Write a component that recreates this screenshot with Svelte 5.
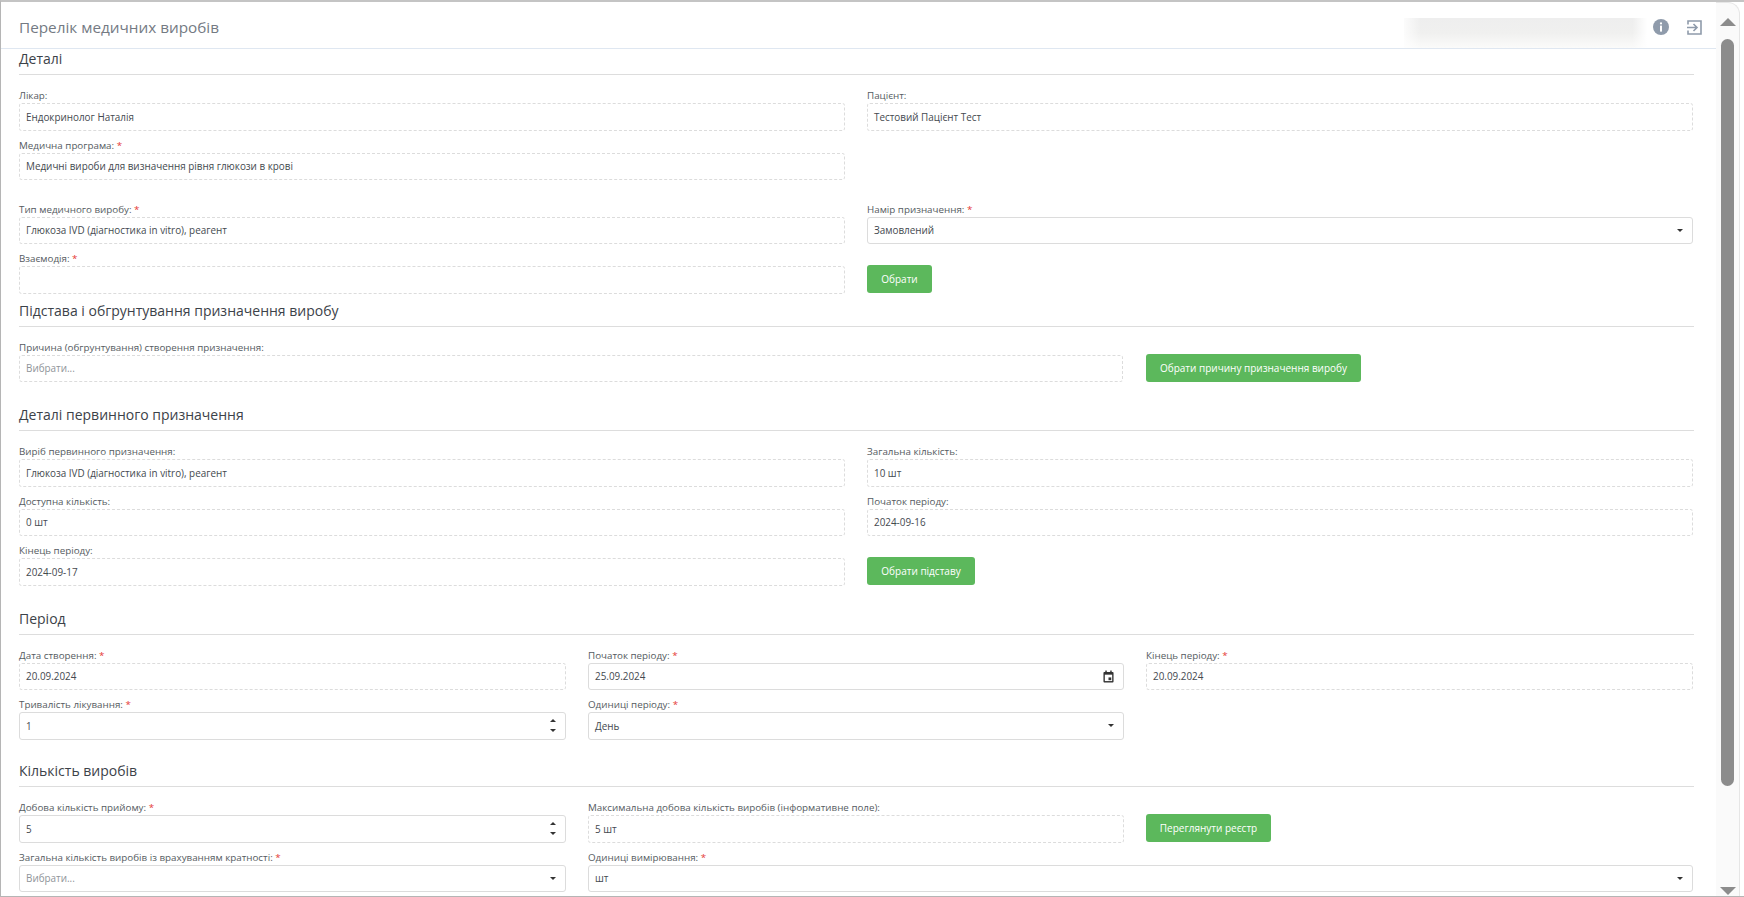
<script>
  const sections = [
    { title: 'Деталі', cls: 'first', rows: [
      [{ l: 'Лікар:', v: 'Ендокринолог Наталія', t: 'ro' }, { l: 'Пацієнт:', v: 'Тестовий Пацієнт Тест', t: 'ro' }],
      [{ l: 'Медична програма:', req: 1, v: 'Медичні вироби для визначення рівня глюкози в крові', t: 'ro' }, { t: 'none' }],
      'gap',
      [{ l: 'Тип медичного виробу:', req: 1, v: 'Глюкоза IVD (діагностика in vitro), реагент', t: 'ro' }, { l: 'Намір призначення:', req: 1, v: 'Замовлений', t: 'select' }],
      [{ l: 'Взаємодія:', req: 1, v: '', t: 'ro' }, { t: 'btn', v: 'Обрати', w: 65 }]
    ]},
    { title: 'Підстава і обгрунтування призначення виробу', grid: 'wide', rows: [
      [{ l: 'Причина (обгрунтування) створення призначення:', v: 'Вибрати...', t: 'ro', ph: 1 }, { t: 'btn', v: 'Обрати причину призначення виробу', w: 215 }]
    ]},
    { title: 'Деталі первинного призначення', rows: [
      [{ l: 'Виріб первинного призначення:', v: 'Глюкоза IVD (діагностика in vitro), реагент', t: 'ro' }, { l: 'Загальна кількість:', v: '10 шт', t: 'ro' }],
      [{ l: 'Доступна кількість:', v: '0 шт', t: 'ro' }, { l: 'Початок періоду:', v: '2024-09-16', t: 'ro' }],
      [{ l: 'Кінець періоду:', v: '2024-09-17', t: 'ro' }, { t: 'btn', v: 'Обрати підставу', w: 108 }]
    ]},
    { title: 'Період', cls: 'tight', grid: 'three', rows: [
      [{ l: 'Дата створення:', req: 1, v: '20.09.2024', t: 'ro' }, { l: 'Початок періоду:', req: 1, v: '25.09.2024', t: 'date' }, { l: 'Кінець періоду:', req: 1, v: '20.09.2024', t: 'ro' }],
      [{ l: 'Тривалість лікування:', req: 1, v: '1', t: 'num' }, { l: 'Одиниці періоду:', req: 1, v: 'День', t: 'select' }, { t: 'none' }]
    ]},
    { title: 'Кількість виробів', grid: 'three', rows: [
      [{ l: 'Добова кількість прийому:', req: 1, v: '5', t: 'num' }, { l: 'Максимальна добова кількість виробів (інформативне поле):', v: '5 шт', t: 'ro' }, { t: 'btn', v: 'Переглянути реєстр', w: 125 }],
      [{ l: 'Загальна кількість виробів із врахуванням кратності:', req: 1, v: 'Вибрати...', t: 'select', ph: 1 }, { l: 'Одиниці вимірювання:', req: 1, v: 'шт', t: 'select', span: 1 }]
    ]}
  ];
</script>

{#snippet caret()}
  <span class="caret"></span>
{/snippet}

<div class="window">
  <div class="panel">
    <header class="head">
      <h1>Перелік медичних виробів</h1>
      <div class="tools">
        <div class="blur"></div>
        <svg class="info" viewBox="0 0 16 16" width="16" height="16" aria-hidden="true">
          <circle cx="8" cy="8" r="8" fill="#8f9bab" />
          <circle cx="8" cy="4.4" r="1.1" fill="#fff" />
          <rect x="7" y="6.6" width="2" height="6" fill="#fff" />
        </svg>
        <svg class="exit" viewBox="0 0 15 15" width="15" height="15" aria-hidden="true">
          <path d="M1 4.5V1h13v13H1v-3.5" fill="none" stroke="#8f9bab" stroke-width="1.6" />
          <path d="M0 7.5h9M6.5 4l3.5 3.5L6.5 11" fill="none" stroke="#8f9bab" stroke-width="1.6" />
        </svg>
      </div>
    </header>
    <main class="content">
      {#each sections as s}
        <section class={s.cls}>
          <h2>{s.title}</h2>
          <div class="rows">
            {#each s.rows as row}
              {#if row === 'gap'}
                <div class="spacer"></div>
              {:else}
                <div class="row {s.grid ?? ''}">
                  {#each row as f}
                    {#if f.t === 'none'}
                      <div></div>
                    {:else if f.t === 'btn'}
                      <div class="btn-cell"><button style="width:{f.w}px">{f.v}</button></div>
                    {:else}
                      <div class="field" class:span={f.span}>
                        <div class="label">{f.l}{#if f.req}&nbsp;<span class="req">*</span>{/if}</div>
                        <div class="input {f.t}" class:ph={f.ph}>
                          <span class="val">{f.v}</span>
                          {#if f.t === 'select'}
                            {@render caret()}
                          {:else if f.t === 'num'}
                            <span class="spin"><i class="up"></i><i class="down"></i></span>
                          {:else if f.t === 'date'}
                            <svg viewBox="0 0 12 14" width="11" height="13" aria-hidden="true">
                              <path d="M1.5 2h9A1 1 0 0 1 11.5 3v9.5a1 1 0 0 1-1 1h-9a1 1 0 0 1-1-1V3a1 1 0 0 1 1-1z" fill="#333" />
                              <rect x="2.5" y="0.5" width="1.6" height="2.5" fill="#333" />
                              <rect x="7.9" y="0.5" width="1.6" height="2.5" fill="#333" />
                              <rect x="2" y="5" width="8" height="7" fill="#fff" />
                              <rect x="6" y="8" width="3" height="3" fill="#333" />
                            </svg>
                          {/if}
                        </div>
                      </div>
                    {/if}
                  {/each}
                </div>
              {/if}
            {/each}
          </div>
        </section>
      {/each}
    </main>
  </div>
  <aside class="scrollbar">
    <i class="arrow up"></i>
    <div class="track"><div class="thumb"></div></div>
    <i class="arrow down"></i>
  </aside>
</div>

<style>
  :global(body) {
    margin: 0;
    background: #fff;
    font-family: "Open Sans", "Liberation Sans", sans-serif;
    overflow: hidden;
  }
  .window {
    box-sizing: border-box;
    height: 897px;
    width: 1744px;
    overflow: hidden;
    display: flex;
    padding-right: 4px;
    border-top: 2px solid #c4c4c4;
    border-left: 1px solid #b5b5b5;
    border-bottom: 1px solid #b5b5b5;
    background: #fff;
  }
  .panel {
    flex: 1;
    min-width: 0;
    display: flex;
    flex-direction: column;
    padding-top: 1px;
  }
  .head {
    flex: none;
    height: 46px;
    box-sizing: border-box;
    border-bottom: 1px solid #dfe7f1;
    display: flex;
    align-items: flex-start;
    justify-content: space-between;
    padding: 0 14px 0 18px;
  }
  h1 {
    margin: 0;
    font-size: 15.3px;
    font-weight: 400;
    line-height: 20px;
    padding-top: 14px;
    color: #747a83;
  }
  .tools {
    display: flex;
    align-items: flex-start;
  }
  .blur {
    width: 243px;
    height: 30px;
    margin-top: 15px;
    background:
      linear-gradient(90deg, rgba(255,255,255,.8) 0, rgba(255,255,255,0) 7%, rgba(255,255,255,0) 94%, #fff 100%),
      linear-gradient(180deg, #eeeeee 0, #f0f0ef 50%, #fbfbfa 100%);
  }
  .info { margin: 16px 0 0 6px; flex: none; }
  .exit { margin: 17px 0 0 18px; flex: none; }
  .content {
    padding: 0 22px 0 18px;
  }
  section { margin-bottom: 16px; }
  section.first { margin-bottom: 0; }
  section.tight { margin-bottom: 14.5px; }
  h2 {
    margin: 0;
    font-size: 14px;
    line-height: 20px;
    font-weight: 400;
    color: #3c4249;
    padding: 5px 0 5px;
    border-bottom: 1px solid #ddd;
  }
  .first h2 { padding-top: 0; }
  .rows { padding-top: 8px; }
  .spacer { height: 14.5px; }
  .row {
    display: grid;
    grid-template-columns: 826px 826px;
    column-gap: 22px;
    height: 49.5px;
  }
  .row.wide { grid-template-columns: 1104px 547px; column-gap: 23px; }
  .row.three { grid-template-columns: 547px 536px 547px; column-gap: 22px; }
  .field { min-width: 0; }
  .field.span { grid-column: span 2; }
  .label {
    height: 20px;
    line-height: 14px;
    padding-top: 6px;
    box-sizing: border-box;
    font-size: 9.8px;
    color: #555b61;
    white-space: nowrap;
  }
  .req { color: #e53935; }
  .input {
    box-sizing: border-box;
    height: 27.5px;
    border: 1px solid #dcdcdc;
    border-radius: 3px;
    display: flex;
    align-items: center;
    justify-content: space-between;
    padding: 0 9px 0 6px;
    font-size: 9.9px;
    color: #44494f;
    background: #fff;
  }
  .input.ro { border-style: dashed; }
  .input.ph .val { color: #8f9499; }
  .caret {
    width: 0;
    height: 0;
    border-left: 3px solid transparent;
    border-right: 3px solid transparent;
    border-top: 3px solid #333;
  }
  .spin {
    display: flex;
    flex-direction: column;
    gap: 7px;
  }
  .spin i {
    display: block;
    width: 0;
    height: 0;
    border-left: 3px solid transparent;
    border-right: 3px solid transparent;
  }
  .spin .up { border-bottom: 3px solid #333; }
  .spin .down { border-top: 3px solid #333; }
  .btn-cell { padding-top: 19px; }
  button {
    display: block;
    height: 28px;
    border: 0;
    border-radius: 3px;
    background: #5cb85c;
    color: #fff;
    font: 400 10px "Open Sans", "Liberation Sans", sans-serif;
    padding: 0;
  }
  .scrollbar {
    flex: none;
    width: 24px;
    display: flex;
    flex-direction: column;
    align-items: center;
    background: #fafafa;
    border-right: 1px solid #e6e6e6;
    border-top: 1px solid #e6e6e6;
    border-top-right-radius: 12px;
    box-sizing: border-box;
  }
  .arrow {
    display: block;
    flex: none;
    width: 0;
    height: 0;
    border-left: 8px solid transparent;
    border-right: 8px solid transparent;
  }
  .arrow.up { border-bottom: 8px solid #8c8c8c; margin-top: 15px; }
  .arrow.down { border-top: 8px solid #8c8c8c; margin-bottom: 1px; }
  .track { flex: 1; padding: 13px 0 0; }
  .thumb {
    width: 13px;
    height: 747px;
    background: #8c8c8c;
    border-radius: 7px;
  }
</style>
